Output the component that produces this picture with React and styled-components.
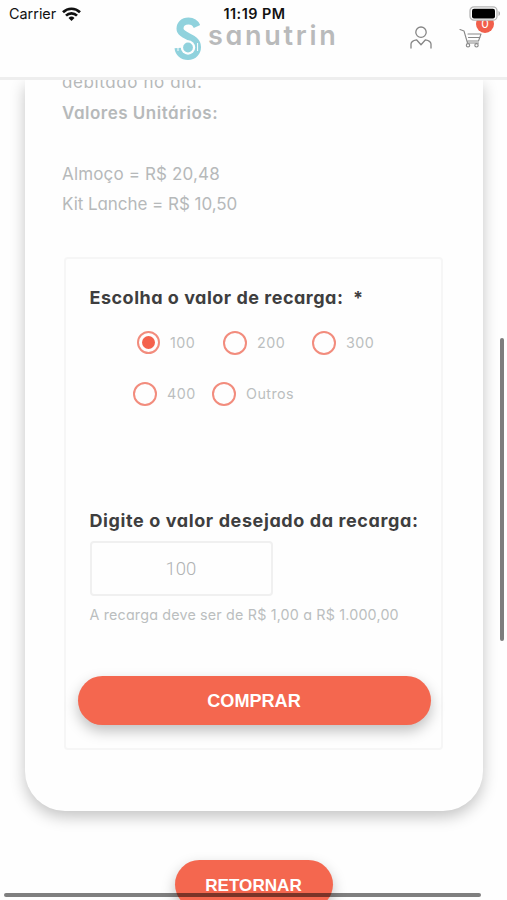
import React, { Component } from 'react';
import styled, { createGlobalStyle } from 'styled-components';

const GlobalStyle = createGlobalStyle`
  * {
    box-sizing: border-box;
  }

  body {
    margin: 0;
    background: #fefefe;
    font-family: Inter, "Open Sans", sans-serif;
    font-feature-settings: "cv11", "calt" 0;
  }
`;

const Screen = styled.div`
  position: relative;
  display: flex;
  flex-direction: column;
  width: 507px;
  height: 900px;
  overflow: hidden;
`;

const StatusBar = styled.div`
  position: absolute;
  top: 0;
  left: 0;
  z-index: 2;
  width: 100%;
  height: 27px;
  padding: 0 6px 0 9px;
  display: grid;
  grid-template-columns: 1fr auto 1fr;
  align-items: center;
  color: #111;
  font-size: 14.4px;
  font-feature-settings: normal;
`;

const Carrier = styled.div`
  display: flex;
  align-items: center;
  gap: 6px;
  letter-spacing: 0;
`;

const Clock = styled.div`
  margin-right: 1px;
  font-size: 14.4px;
  font-weight: 600;
  letter-spacing: 0.5px;
`;

const Battery = styled.div`
  display: flex;
  justify-content: flex-end;
`;

const Header = styled.header`
  flex: none;
  display: flex;
  align-items: flex-start;
  height: 80px;
  padding: 17px 0 0 173px;
  background: #fefefe;
  border-bottom: 3px solid #eee;
`;

const Brand = styled.div`
  display: flex;
  width: 237px;
  gap: 6px;
`;

const BrandName = styled.span`
  margin-top: 2px;
  color: #b9babb;
  font-size: 27px;
  font-weight: 600;
  line-height: 33px;
  letter-spacing: 2.7px;
`;

const UserButton = styled.a`
  width: 22px;
  margin: 9px 27px 0 0;
`;

const CartButton = styled.a`
  position: relative;
  width: 24px;
  margin-top: 11px;
`;

const Badge = styled.span`
  position: absolute;
  top: -13px;
  left: 17px;
  width: 18px;
  height: 18px;
  border-radius: 50%;
  background: #f15f4b;
  color: #fff;
  font-size: 12px;
  line-height: 18px;
  text-align: center;
`;

const Content = styled.main`
  flex: 1;
  min-height: 0;
  overflow: hidden;
  display: flex;
  flex-direction: column;
  align-items: center;
`;

const Card = styled.section`
  flex: none;
  width: 458px;
  height: 731px;
  margin-right: -1px;
  padding: 0 40px 0 37px;
  border-radius: 0 0 40px 40px;
  background: #fefefe;
  box-shadow: 0 6px 15px rgba(0, 0, 0, 0.23);
`;

const Description = styled.div`
  height: 177px;
  overflow: hidden;
`;

const Line = styled.p`
  height: 30.5px;
  margin: ${props => props.$first ? '-13px' : '0'} 0 0;
  color: #b6b9ba;
  font-size: 17px;
  font-weight: ${props => props.$bold ? 600 : 400};
  line-height: 30.5px;
  letter-spacing: ${props => props.$spacing || 0}px;
  white-space: pre;
`;

const Form = styled.form`
  width: 379px;
  height: 493px;
  margin-left: 2px;
  padding: 25px 11px 0 11.5px;
  border: 2px solid #f6f6f6;
  border-radius: 4px;
`;

const Title = styled.h3`
  margin: 0 0 0 12px;
  color: #3e3e3f;
  font-size: 18px;
  font-weight: 700;
  line-height: 28px;
  letter-spacing: ${props => props.$spacing}px;
  white-space: pre;
`;

const Options = styled.div`
  height: 195px;
  padding-top: 5px;
`;

const OptionRow = styled.div`
  display: flex;
  height: 51px;
  align-items: center;
  padding-left: ${props => props.$indent}px;
`;

const Option = styled.label`
  display: flex;
  align-items: center;
  width: ${props => props.$width}px;
  color: #bbbebf;
  font-size: 14.3px;
  font-weight: 400;
  letter-spacing: 0.45px;
`;

const Radio = styled.span`
  flex: none;
  display: flex;
  align-items: center;
  justify-content: center;
  width: ${props => props.$checked ? 23 : 24}px;
  height: ${props => props.$checked ? 23 : 24}px;
  margin-right: 10.5px;
  border: 2px solid #f28c7d;
  border-radius: 50%;

  &::after {
    content: "";
    display: ${props => props.$checked ? 'block' : 'none'};
    width: 13px;
    height: 13px;
    border-radius: 50%;
    background: #f4614c;
  }
`;

const Input = styled.input`
  display: block;
  width: 183px;
  height: 55px;
  margin: 6px 0 0 12px;
  padding: 0;
  border: 2px solid #f0f0f0;
  border-radius: 4px;
  background: #fefefe;
  color: #b0b2b3;
  font-family: Roboto, sans-serif;
  font-size: 18.5px;
  font-weight: 300;
  text-align: center;
  outline: none;
`;

const Hint = styled.p`
  margin: 9px 0 0 12px;
  color: #bbbebf;
  font-size: 14.3px;
  font-weight: 400;
  line-height: 20px;
  letter-spacing: 0.18px;
  white-space: nowrap;
`;

const Button = styled.button`
  flex: none;
  display: block;
  width: ${props => props.$width}px;
  height: 49px;
  margin: ${props => props.$top}px 0 0;
  padding: 2px 0 0;
  border: 0;
  border-radius: 25px;
  background: #f4674f;
  box-shadow: 0 6px 14px rgba(0, 0, 0, 0.25);
  color: #fff;
  font-family: "Liberation Sans", Arial, sans-serif;
  font-size: ${props => props.$size}px;
  font-weight: 700;
`;

const VerticalBar = styled.div`
  position: absolute;
  top: 338px;
  right: 3px;
  width: 4px;
  height: 303px;
  border-radius: 2px;
  background: #7d7d7d;
`;

const HorizontalBar = styled.div`
  position: absolute;
  left: 4px;
  bottom: 3px;
  width: 477px;
  height: 4px;
  border-radius: 2px;
  background: rgba(0, 0, 0, 0.5);
`;

const WifiIcon = () => (
  <svg width="19" height="14" viewBox="0 0 19 14" fill="none" stroke="#111" strokeWidth="2.7">
    <path d="M1 5.2a12.2 12.2 0 0 1 17 0" />
    <path d="M4 8.6a7.9 7.9 0 0 1 11 0" />
    <path d="M9.5 14 6.5 11a4.3 4.3 0 0 1 6 0z" fill="#111" stroke="none" />
  </svg>
);

const BatteryIcon = () => (
  <svg width="32" height="15" viewBox="0 0 32 15">
    <rect x="1" y="0.8" width="27" height="13.4" rx="4" fill="#fff" stroke="#b5b5b5" strokeWidth="1.3" />
    <rect x="3" y="2.8" width="23" height="9.6" rx="2" fill="#000" />
    <path d="M29.5 5v5c2-.7 2-4.3 0-5z" fill="#aaa" />
  </svg>
);

const LogoIcon = () => (
  <svg width="29" height="44" viewBox="0 0 29 44" fill="none">
    <path
      d="M24 9.500C22 5 18.500 4 15.500 4C10 4 7 7.500 7 11.500C7 20 24.500 19 24.500 30C24.500 35.500 20.500 39.500 15 39.500C9.500 39.500 5.500 36 5 31"
      stroke="#90d2dd"
      strokeWidth="7"
    />
    <circle cx="15" cy="30.500" r="7.200" fill="#fefefe" />
    <circle cx="15" cy="30.500" r="4.900" fill="#90d2dd" />
    <path d="M5 25.500v3.500M5 29v5M24.600 26v8" stroke="#fefefe" strokeWidth="1" />
    <path d="M3.800 25.500v3h2.600v-3" stroke="#fefefe" strokeWidth="0.700" />
  </svg>
);

const UserIcon = () => (
  <svg width="22" height="23" viewBox="0 0 22 23" fill="none" stroke="#858585" strokeWidth="1.300" strokeLinecap="round" strokeLinejoin="round">
    <circle cx="11" cy="6.200" r="5.200" />
    <path d="M1 22v-4c0-2.500 2-3.500 5.500-4.200L11 18.800l4.500-5C19 14.500 21 15.500 21 18v4" />
  </svg>
);

const CartIcon = () => (
  <svg width="24" height="21" viewBox="0 0 24 21" fill="none" stroke="#888" strokeWidth="1.100" strokeLinecap="round" strokeLinejoin="round">
    <path d="M1 1.500l4 1.500 3.500 12h11M9 6H22l-2.500 7H9M9.500 9.500h11.500" />
    <circle cx="9" cy="17.300" r="1.700" />
    <circle cx="17.500" cy="17.300" r="1.700" />
  </svg>
);

const rows = [
  { indent: 59, options: [
    { label: '100', width: 86 },
    { label: '200', width: 89 },
    { label: '300', width: 70 }
  ] },
  { indent: 55, options: [
    { label: '400', width: 79 },
    { label: 'Outros', width: 90 }
  ] }
];

class App extends Component {

  constructor (props) {
    super(props);

    this.state = {
      amount: '100',
      selected: '100'
    }

    this.handleChange = this.handleChange.bind(this);
  }

  handleChange(e) {
    this.setState({
      amount: e.target.value
    });
  }

  render() {
    return (
      <Screen>
        <GlobalStyle />
        <StatusBar>
          <Carrier>Carrier <WifiIcon /></Carrier>
          <Clock>11:19 PM</Clock>
          <Battery><BatteryIcon /></Battery>
        </StatusBar>
        <Header>
          <Brand>
            <LogoIcon />
            <BrandName>sanutrin</BrandName>
          </Brand>
          <UserButton><UserIcon /></UserButton>
          <CartButton>
            <CartIcon />
            <Badge>0</Badge>
          </CartButton>
        </Header>
        <Content>
          <Card>
            <Description>
              <Line $first $spacing={0.6}>debitado no dia.</Line>
              <Line $bold $spacing={0.5}>Valores Unitários:</Line>
              <Line />
              <Line $spacing={0.15}>Almoço = R$ 20,48</Line>
              <Line $spacing={-0.05}>Kit Lanche = R$ 10,50</Line>
            </Description>
            <Form>
              <Title $spacing={0.5}>Escolha o valor de recarga:  *</Title>
              <Options>
                {rows.map(row => (
                  <OptionRow key={row.indent} $indent={row.indent}>
                    {row.options.map(({ label, width }) => (
                      <Option key={label} $width={width} onClick={() => this.setState({ selected: label })}>
                        <Radio $checked={this.state.selected === label} />
                        {label}
                      </Option>
                    ))}
                  </OptionRow>
                ))}
              </Options>
              <Title $spacing={0.6}>Digite o valor desejado da recarga:</Title>
              <Input value={this.state.amount} onChange={this.handleChange} />
              <Hint>A recarga deve ser de R$ 1,00 a R$ 1.000,00</Hint>
              <Button type="button" $width={353} $top={51} $size={18.1}>COMPRAR</Button>
            </Form>
          </Card>
          <Button $width={158} $top={49} $size={17.1}>RETORNAR</Button>
        </Content>
        <VerticalBar />
        <HorizontalBar />
      </Screen>
    );
  }
}

export default App;
